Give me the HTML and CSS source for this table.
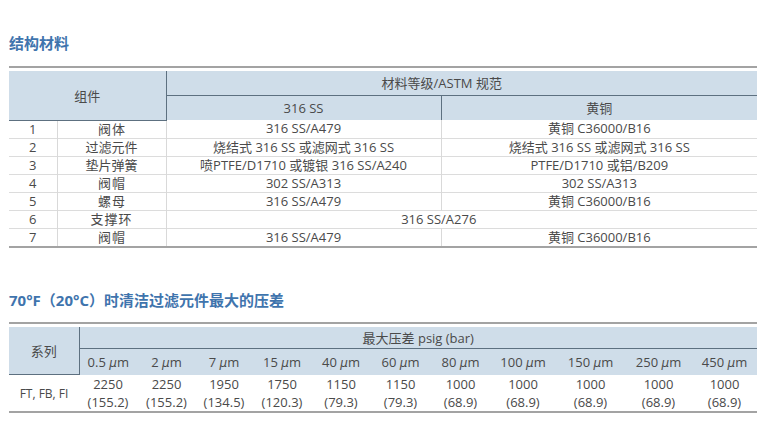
FILE: index.html
```html
<!DOCTYPE html>
<html lang="zh-CN">
<head>
<meta charset="utf-8">
<title>结构材料</title>
<link rel="stylesheet" href="styles.css">
</head>
<body>
<div class="page">
  <h2 class="sec-title first">结构材料</h2>
  <div class="tbl-wrap">
    <table class="grid mat">
      <colgroup>
        <col class="c-no"><col class="c-part"><col class="c-ss"><col class="c-br">
      </colgroup>
      <thead>
        <tr class="h1">
          <th colspan="2" rowspan="2" class="vline">组件</th>
          <th colspan="2" class="spec">材料等级/ASTM 规范</th>
        </tr>
        <tr class="h2">
          <th class="vline">316 SS</th>
          <th>黄铜</th>
        </tr>
      </thead>
      <tbody>
        <tr><td>1</td><td class="w2">阀体</td><td>316 SS/A479</td><td>黄铜 C36000/B16</td></tr>
        <tr><td>2</td><td>过滤元件</td><td>烧结式 316 SS 或滤网式 316 SS</td><td>烧结式 316 SS 或滤网式 316 SS</td></tr>
        <tr><td>3</td><td>垫片弹簧</td><td>喷PTFE/D1710 或镀银 316 SS/A240</td><td>PTFE/D1710 或铝/B209</td></tr>
        <tr><td>4</td><td class="w2">阀帽</td><td>302 SS/A313</td><td>302 SS/A313</td></tr>
        <tr><td>5</td><td class="w2">螺母</td><td>316 SS/A479</td><td>黄铜 C36000/B16</td></tr>
        <tr><td>6</td><td class="w3">支撑环</td><td colspan="2" class="span">316 SS/A276</td></tr>
        <tr><td>7</td><td class="w2">阀帽</td><td>316 SS/A479</td><td>黄铜 C36000/B16</td></tr>
      </tbody>
    </table>
  </div>

  <h2 class="sec-title second">70°F（20°C）时清洁过滤元件最大的压差</h2>
  <div class="tbl-wrap">
    <table class="grid dp">
      <colgroup>
        <col class="d-series"><col class="d58"><col class="d59"><col class="d56"><col class="d60"><col class="d58"><col class="d61"><col class="d59"><col class="d66"><col class="d69"><col class="d67"><col class="d65">
      </colgroup>
      <thead>
        <tr class="h1">
          <th rowspan="2" class="vline">系列</th>
          <th colspan="11">最大压差 psig (bar)</th>
        </tr>
        <tr class="h2">
          <th>0.5 <i>μ</i>m</th><th>2 <i>μ</i>m</th><th>7 <i>μ</i>m</th><th>15 <i>μ</i>m</th><th>40 <i>μ</i>m</th><th>60 <i>μ</i>m</th><th>80 <i>μ</i>m</th><th>100 <i>μ</i>m</th><th>150 <i>μ</i>m</th><th>250 <i>μ</i>m</th><th>450 <i>μ</i>m</th>
        </tr>
      </thead>
      <tbody>
        <tr>
          <td class="series">FT, FB, FI</td>
          <td><div>2250</div><div>(155.2)</div></td>
          <td><div>2250</div><div>(155.2)</div></td>
          <td><div>1950</div><div>(134.5)</div></td>
          <td><div>1750</div><div>(120.3)</div></td>
          <td><div>1150</div><div>(79.3)</div></td>
          <td><div>1150</div><div>(79.3)</div></td>
          <td><div>1000</div><div>(68.9)</div></td>
          <td><div>1000</div><div>(68.9)</div></td>
          <td><div>1000</div><div>(68.9)</div></td>
          <td><div>1000</div><div>(68.9)</div></td>
          <td><div>1000</div><div>(68.9)</div></td>
        </tr>
      </tbody>
    </table>
  </div>
</div>
</body>
</html>
```

FILE: styles.css
```css
html, body {
  margin: 0;
  padding: 0;
  background: #ffffff;
}

body {
  font-family: "Open Sans", "Noto Sans CJK SC", sans-serif;
  color: #4a4a4a;
  font-size: 13px;
}

.page {
  padding: 0 8px 0 9px;
  width: 748px;
}

.sec-title {
  margin: 0;
  font-family: "Open Sans", "Noto Sans CJK SC", sans-serif;
  font-weight: 700;
  font-size: 15px;
  line-height: 20px;
  color: #3f74ad;
}

.sec-title.first {
  padding-top: 33px;
  margin-bottom: 13px;
}

.sec-title.second {
  margin-top: 42px;
  margin-bottom: 12px;
}

.tbl-wrap {
  border-top: 2px solid #a3a3a3;
  border-bottom: 2px solid #a3a3a3;
  padding-top: 3px;
}

.grid {
  width: 748px;
  border-collapse: collapse;
  table-layout: fixed;
}

.grid th,
.grid td {
  padding: 0;
  text-align: center;
  font-weight: 400;
  white-space: nowrap;
}

.grid thead th {
  background: #cfdde9;
  color: #4a4a4a;
}

.grid thead tr.h1 th {
  border-bottom: 1px solid #5d7080;
}

.grid thead th.vline {
  border-right: 1px solid #5d7080;
}

.mat .c-no { width: 48px; }
.mat .c-part { width: 109px; }
.mat .c-ss { width: 275px; }
.mat .c-br { width: 316px; }

.mat thead tr.h1 { height: 24px; }
.mat thead tr.h2 { height: 25px; }

.mat thead th.spec {
  padding-right: 40px;
}

.mat tbody td {
  height: 17px;
  line-height: 17px;
  border-right: 1px solid #d9d9d9;
  border-top: 1px solid #dcdcdc;
}

.mat tbody tr:first-child td {
  border-top: none;
}

.mat tbody td:last-child {
  border-right: none;
}

.mat tbody td.span {
  padding-right: 46px;
}

.mat .w2 {
  letter-spacing: 1px;
  text-indent: 1px;
}

.mat .w3 {
  letter-spacing: 1px;
}

.dp .d-series { width: 70px; }
.dp .d56 { width: 56px; }
.dp .d58 { width: 58px; }
.dp .d59 { width: 59px; }
.dp .d60 { width: 60px; }
.dp .d61 { width: 61px; }
.dp .d65 { width: 65px; }
.dp .d66 { width: 66px; }
.dp .d67 { width: 67px; }
.dp .d69 { width: 69px; }

.dp thead tr.h1 { height: 22px; }
.dp thead tr.h2 { height: 26px; }

.dp i {
  font-style: italic;
  font-family: "DejaVu Sans", sans-serif;
  font-size: 12px;
}

.dp tbody td {
  height: 36px;
  font-size: 13px;
}

.dp tbody td div {
  line-height: 18px;
}

.dp tbody td.series {
  font-size: 12px;
}
```
